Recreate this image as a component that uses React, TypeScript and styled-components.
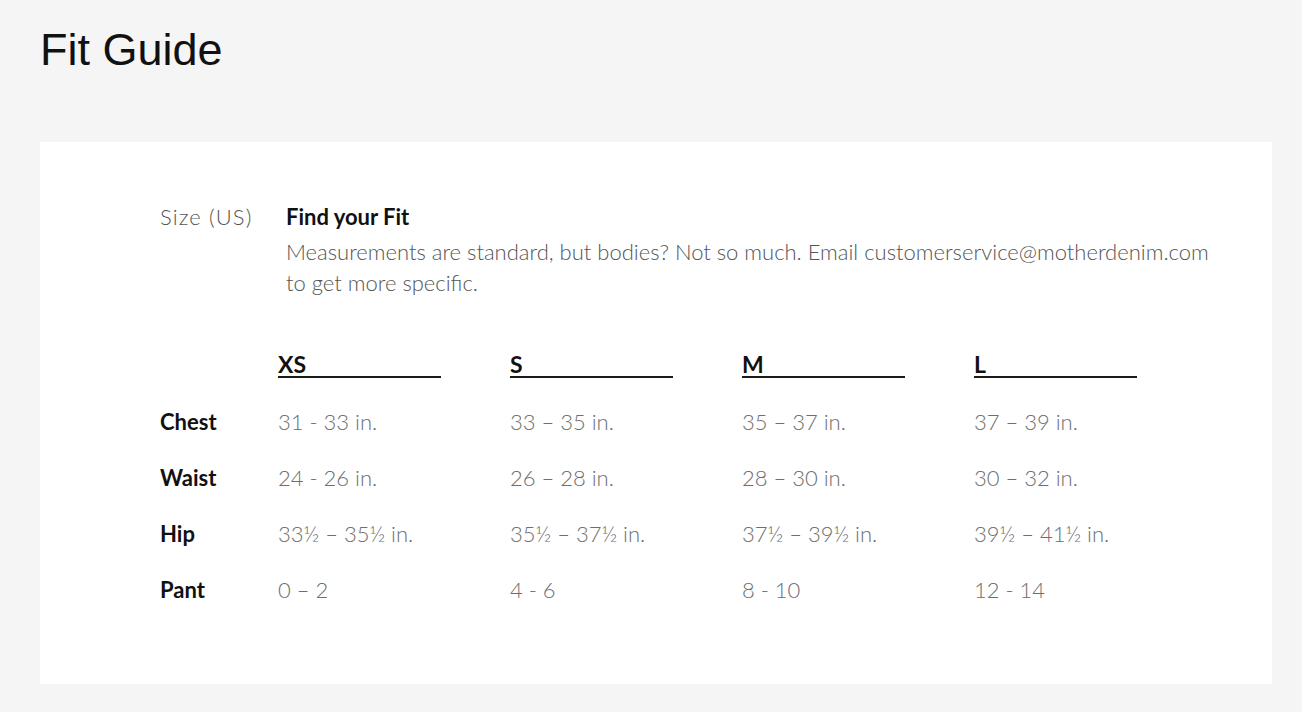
import React from "react";
import styled, { createGlobalStyle } from "styled-components";

const Global = createGlobalStyle`
  html, body { margin: 0; padding: 0; background: #f5f5f5; }
  body { font-family: Lato, "Noto Sans", sans-serif; }
`;

const Page = styled.div`
  padding: 28px 30px 28px 40px;
`;

const Title = styled.h1`
  margin: 0;
  font-family: "Liberation Sans", Arial, sans-serif;
  font-weight: 400;
  font-size: 45px;
  line-height: 44px;
  color: #111;
`;

const Card = styled.div`
  margin-top: 70px;
  background: #fff;
  padding: 60px 0 66px 120px;
`;

const Intro = styled.div`
  display: flex;
`;

const SizeLabel = styled.div`
  width: 126px;
  flex: none;
  font-weight: 300;
  font-size: 22px;
  letter-spacing: 1.1px;
  line-height: 30px;
  color: #555;
`;

const IntroText = styled.div`
  flex: 1;
`;

const IntroTitle = styled.div`
  font-weight: 700;
  font-size: 22px;
  line-height: 30px;
  color: #111;
`;

const IntroDesc = styled.p`
  margin: 4px 0 0;
  font-weight: 300;
  font-size: 22px;
  line-height: 31px;
  color: #555;
  max-width: 930px;
`;

const Table = styled.div`
  margin-top: 54px;
  display: grid;
  grid-template-columns: 118px repeat(4, 232px);
`;

const HeaderCell = styled.div`
  padding-bottom: 16px;
`;

const HeaderLabel = styled.div`
  width: 163px;
  font-weight: 700;
  font-size: 23px;
  line-height: 24px;
  color: #111;
  border-bottom: 2px solid #1a1a1a;
`;

const RowLabel = styled.div`
  font-weight: 700;
  font-size: 22px;
  line-height: 56px;
  color: #111;
`;

const Value = styled.div`
  font-weight: 300;
  font-size: 22px;
  line-height: 56px;
  color: #6e6e6e;
`;

const sizes = ["XS", "S", "M", "L"];

const rows: { label: string; values: string[] }[] = [
  { label: "Chest", values: ["31 - 33 in.", "33 – 35 in.", "35 – 37 in.", "37 – 39 in."] },
  { label: "Waist", values: ["24 - 26 in.", "26 – 28 in.", "28 – 30 in.", "30 – 32 in."] },
  { label: "Hip", values: ["33½ – 35½ in.", "35½ – 37½ in.", "37½ – 39½ in.", "39½ – 41½ in."] },
  { label: "Pant", values: ["0 – 2", "4 - 6", "8 - 10", "12 - 14"] },
];

export default function App() {
  return (
    <>
      <Global />
      <Page>
        <Title>Fit Guide</Title>
        <Card>
          <Intro>
            <SizeLabel>Size (US)</SizeLabel>
            <IntroText>
              <IntroTitle>Find your Fit</IntroTitle>
              <IntroDesc>
                Measurements are standard, but bodies? Not so much. Email customerservice@motherdenim.com to get more specific.
              </IntroDesc>
            </IntroText>
          </Intro>
          <Table>
            <div />
            {sizes.map((s) => (
              <HeaderCell key={s}>
                <HeaderLabel>{s}</HeaderLabel>
              </HeaderCell>
            ))}
            {rows.map((r) => (
              <React.Fragment key={r.label}>
                <RowLabel>{r.label}</RowLabel>
                {r.values.map((v, i) => (
                  <Value key={i}>{v}</Value>
                ))}
              </React.Fragment>
            ))}
          </Table>
        </Card>
      </Page>
    </>
  );
}
